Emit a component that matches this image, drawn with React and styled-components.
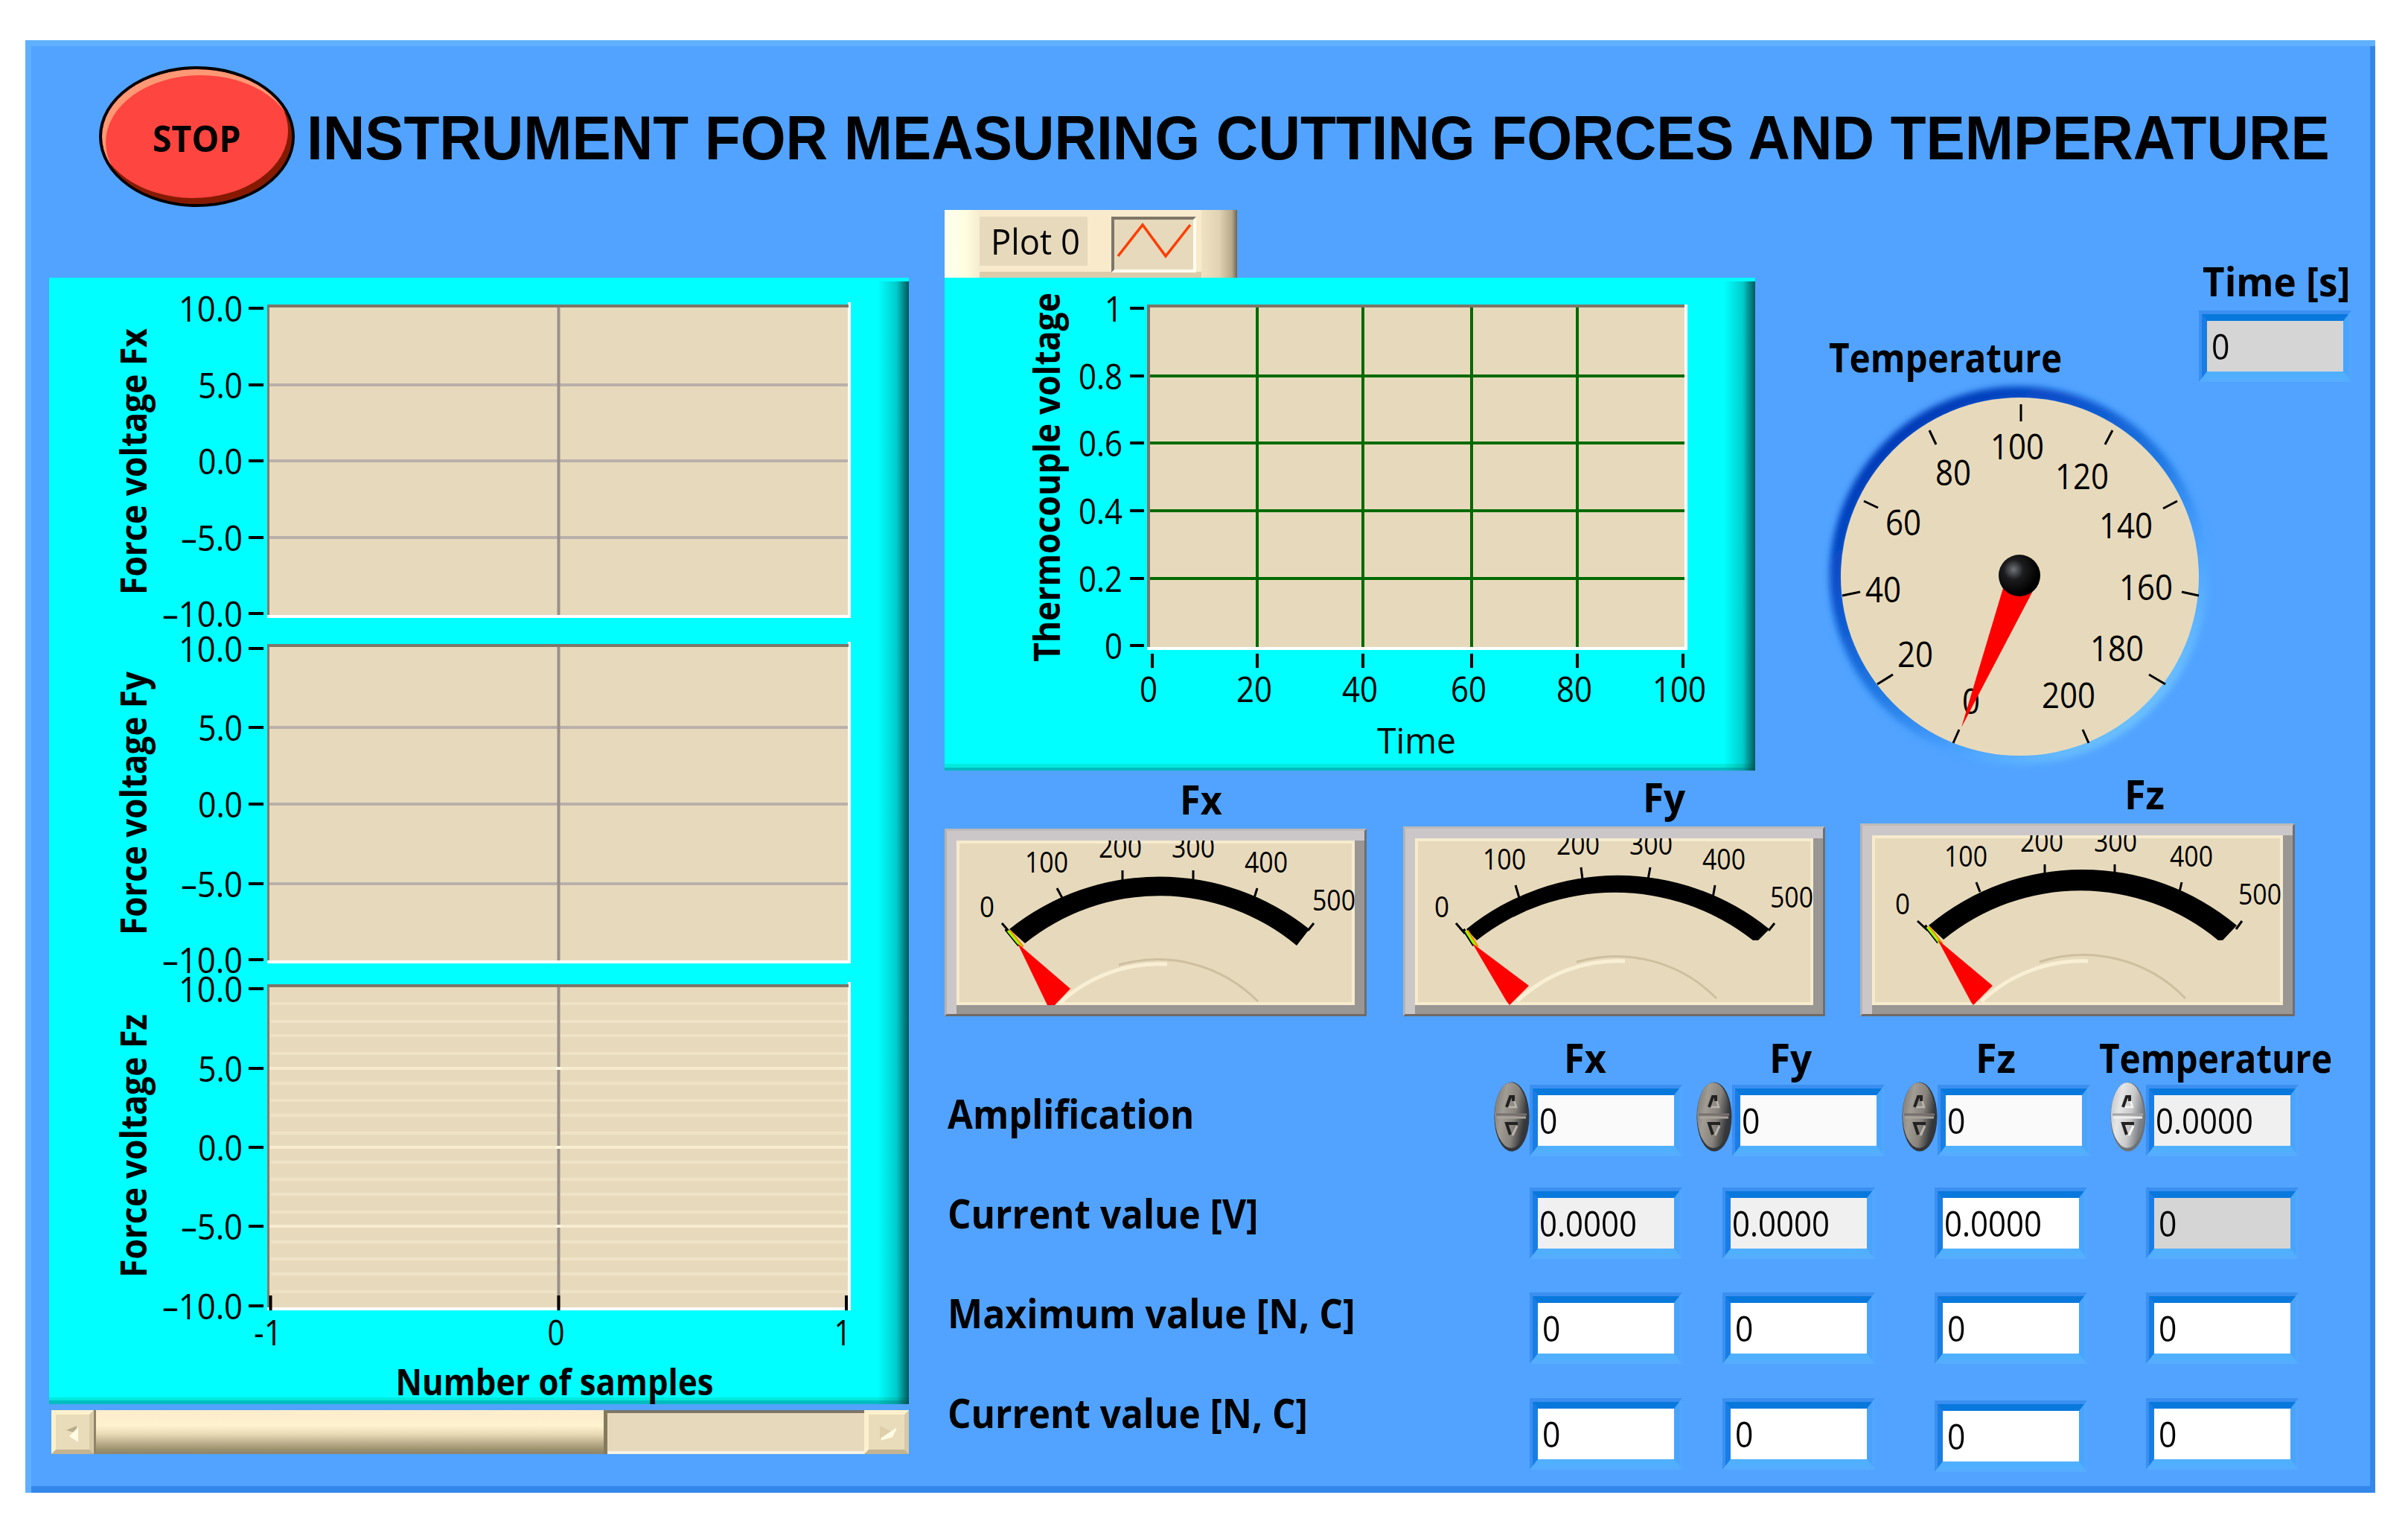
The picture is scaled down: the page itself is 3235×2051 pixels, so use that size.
import React, { useLayoutEffect, useRef, useState } from "react";
import styled, { createGlobalStyle } from "styled-components";

const SKIN = "#e7dabc";
const BLUE = "#51a3ff";

// ---------- data ----------

const graphs = [
    { name: "Fx", top: 409, bottom: 830, ticks: [414, 517, 619, 722, 824], labelY: 620, labelLen: 358, grid: "#b9b0ab" },
    { name: "Fy", top: 865, bottom: 1294, ticks: [871, 977, 1080, 1187, 1289], labelY: 1079, labelLen: 354, grid: "#b9b0ab" },
    { name: "Fz", top: 1322, bottom: 1760, ticks: [1328, 1435, 1541, 1647, 1754], labelY: 1539, labelLen: 354, grid: "#f6ebce", minor: true },
];
const graphLabels = [
    { text: "10.0", w: 86 },
    { text: "5.0", w: 60 },
    { text: "0.0", w: 60 },
    { text: "–5.0", w: 83 },
    { text: "–10.0", w: 108 },
];
const minorLines = [1348, 1372, 1391, 1415, 1455, 1478, 1498, 1522, 1561, 1584, 1604, 1628, 1668, 1691, 1711, 1735];

const chartY = [
    { text: "1", y: 414 },
    { text: "0.8", y: 505 },
    { text: "0.6", y: 595 },
    { text: "0.4", y: 686 },
    { text: "0.2", y: 777 },
    { text: "0", y: 867 },
];
const chartX = [
    { text: "0", x: 1548, tx: 1543 },
    { text: "20", x: 1689, tx: 1685 },
    { text: "40", x: 1831, tx: 1827 },
    { text: "60", x: 1977, tx: 1973 },
    { text: "80", x: 2119, tx: 2115 },
    { text: "100", x: 2261, tx: 2256 },
];

const dial = [
    { text: "0", x: 2648, y: 959, tick: "M2624 998L2632 980" },
    { text: "20", x: 2573, y: 896, tick: "M2522 919L2543 906" },
    { text: "40", x: 2530, y: 809, tick: "M2475 800L2499 795" },
    { text: "60", x: 2557, y: 719, tick: "M2504 673L2523 682" },
    { text: "80", x: 2624, y: 652, tick: "M2592 578L2601 597" },
    { text: "100", x: 2710, y: 617, tick: "M2715 543V566" },
    { text: "120", x: 2797, y: 657, tick: "M2838 578L2828 597" },
    { text: "140", x: 2856, y: 723, tick: "M2925 673L2906 683" },
    { text: "160", x: 2883, y: 806, tick: "M2954 800L2931 795" },
    { text: "180", x: 2844, y: 888, tick: "M2909 919L2887 906" },
    { text: "200", x: 2779, y: 951, tick: "M2806 998L2798 980" },
];

const meters = [
    {
        name: "Fx", width: 567, height: 252, gap: 0, pad: 316,
        view: "1285 1129 535 221",
        labels: [[1326, 1232], [1406, 1172], [1505, 1152], [1603, 1152], [1701, 1172], [1792, 1223]],
        ticks: "M1346 1240L1358 1254M1420 1193L1427 1206M1508 1169V1183M1603 1169V1183M1689 1193L1685 1206M1765 1240L1757 1250",
        band: "M1356 1248A323 323 0 0 1 1759 1248L1742 1270A288 288 0 0 0 1377 1267Z",
        tip: "M1351 1248L1369 1270",
        needle: "1367,1267 1438,1328 1417,1350 1407,1350",
        hub: [1422, 1553, 1690, 1293],
    },
    {
        name: "Fy", width: 567, height: 255, gap: 49, pad: 322,
        view: "1901 1126 535 224",
        labels: [[1937, 1232], [2021, 1168], [2120, 1148], [2218, 1148], [2316, 1168], [2407, 1219]],
        ticks: "M1956 1240L1968 1254M2036 1189L2041 1206M2124 1165L2126 1181M2217 1165L2214 1181M2304 1189L2301 1206M2384 1240L2376 1250",
        band: "M1970 1248A323 323 0 0 1 2377 1248L2362 1263H2355A300 300 0 0 0 1984 1263Z",
        tip: "M1966 1248L1980 1270",
        needle: "1978,1267 2054,1324 2028,1350 2024,1345",
        hub: [2038, 2168, 2306, 1289],
    },
    {
        name: "Fz", width: 584, height: 259, gap: 47, pad: 355,
        view: "2515 1122 552 228",
        labels: [[2556, 1228], [2641, 1164], [2743, 1144], [2842, 1144], [2944, 1164], [3036, 1215]],
        ticks: "M2576 1237L2590 1250M2655 1185L2660 1198M2747 1161V1175M2841 1161V1175M2931 1185L2928 1198M3012 1237L3004 1248",
        band: "M2591 1243A323 323 0 0 1 3005 1243L2986 1263H2980A290 290 0 0 0 2611 1262Z",
        tip: "M2586 1243L2604 1266",
        needle: "2603,1262 2677,1324 2651,1350 2648,1346",
        hub: [2662, 2790, 2936, 1289],
    },
];

const rowLabels = [
    { text: "Amplification", w: 331 },
    { text: "Current value [V]", w: 417 },
    { text: "Maximum value [N, C]", w: 548 },
    { text: "Current value [N, C]", w: 484 },
];

const columns = [
    { name: "Fx", w: 57, head: 94, gap: 0, indent: 48, spin: "dark", values: [["0", "#fafafa"], ["0.0000", "#f0f0f0"], ["0", "#fff"], ["0", "#fff"]] },
    { name: "Fy", w: 57, head: 98, gap: 19, indent: 35, spin: "dark", values: [["0", "#fafafa"], ["0.0000", "#f0f0f0"], ["0", "#fff"], ["0", "#fff"]] },
    { name: "Fz", w: 54, head: 99, gap: 23, indent: 44, spin: "dark", values: [["0", "#fafafa"], ["0.0000", "#fff"], ["0", "#fff"], ["0", "#fff", 3]] },
    { name: "Temperature", w: 313, head: -15, gap: 27, indent: 48, spin: "light", values: [["0.0000", "#f0f0f0"], ["0", "#d5d5d5"], ["0", "#fff"], ["0", "#fff"]] },
];
const rowGaps = [8, 42, 45, 46];

// ---------- text ----------

// Squeezes a line of text to the given width, as the panel font is narrower
const FitText = ({ children, width, ...rest }) => {
    const ref = useRef(null);
    const [scale, setScale] = useState(1);
    useLayoutEffect(() => {
        setScale(width / ref.current.offsetWidth);
    }, [width, children]);
    return (
        <TextSlot $width={width} {...rest}>
            <TextInner ref={ref} style={{ transform: `scaleX(${scale})` }}>{children}</TextInner>
        </TextSlot>
    );
};

const T = ({ x, y, w, size = 48, anchor = "middle", bold, children, ...rest }) => (
    <text x={x} y={y} fontSize={size} fontWeight={bold ? 700 : 400} textAnchor={anchor}
        textLength={w} lengthAdjust="spacingAndGlyphs" {...rest}>
        {children}
    </text>
);

// ---------- parts ----------

const ForceGraphs = () => (
    <GraphPanel>
        <Drawing viewBox="66 373 1155 1513" width="1155" height="1513">
            {graphs.map(g => (
                <g key={g.name}>
                    <rect x="359" y={g.top} width="784" height={g.bottom - g.top} fill={SKIN} />
                    {g.minor && minorLines.map(y => (
                        <path key={y} d={`M364 ${y}H1139`} stroke="#efe3c7" strokeWidth="4" />
                    ))}
                    {g.ticks.slice(1, 4).map(y => (
                        <path key={y} d={`M362 ${y}H1139`} stroke={g.grid} strokeWidth="4" />
                    ))}
                    <path d={`M750.5 ${g.top}V${g.bottom - 4}`} stroke="#9b8f8c" strokeWidth="4" />
                    {g.minor && g.ticks.slice(1, 4).map(y => (
                        <rect key={y} x="747" y={y - 2} width="7" height="4" fill="#fff6e0" />
                    ))}
                    <path d={`M1141 ${g.top - 3}V${g.bottom}`} stroke="#fff" strokeWidth="4" />
                    <path d={`M359 ${g.bottom - 2}H1143`} stroke="#fff" strokeWidth="4" />
                    <path d={`M360.5 ${g.bottom - 4}V${g.top}`} stroke="#857c6e" strokeWidth="3" />
                    <path d={`M359 ${g.top + 2}H1140`} stroke="#7d7668" strokeWidth="4" />
                    {g.ticks.map((y, i) => (
                        <g key={y}>
                            <path d={`M334 ${y}H354`} stroke="#000" strokeWidth="4" />
                            <T x={326} y={y + 18} w={graphLabels[i].w} anchor="end">{graphLabels[i].text}</T>
                        </g>
                    ))}
                    <T x={0} y={0} w={g.labelLen} bold transform={`translate(197 ${g.labelY}) rotate(-90)`}>
                        {`Force voltage ${g.name}`}
                    </T>
                </g>
            ))}
            <path d="M363.5 1740V1760M750.5 1740V1760M1137 1740V1760" stroke="#000" strokeWidth="4" />
            <T x={360} y={1807} w={38}>-1</T>
            <T x={747} y={1807} w={23}>0</T>
            <T x={1132} y={1807} w={23}>1</T>
            <T x={745} y={1874} w={427} bold>Number of samples</T>
        </Drawing>
    </GraphPanel>
);

const SamplesScrollbar = () => (
    <Scrollbar>
        <ScrollButton $width={57}>
            <svg width="26" height="34" viewBox="0 0 26 34">
                <path d="M4 14L18 8V18Z" fill="#b9ad8b" />
                <path d="M8 22L20 10V30Z" fill="#fffbe2" />
            </svg>
        </ScrollButton>
        <ScrollThumb />
        <ScrollTrack />
        <ScrollButton $width={60}>
            <svg width="26" height="34" viewBox="0 0 26 34">
                <path d="M4 8V26L20 16Z" fill="#dccfaa" />
                <path d="M6 26L24 14L20 22Z" fill="#fffbe2" stroke="#fffbe2" strokeWidth="3" />
            </svg>
        </ScrollButton>
    </Scrollbar>
);

const PlotLegend = () => (
    <Legend>
        <LegendName><FitText width={120}>Plot 0</FitText></LegendName>
        <LegendSwatch>
            <svg width="106" height="66" viewBox="0 0 106 66">
                <path d="M5 49L38 7L69 49L102 7" fill="none" stroke="#ff3c00" strokeWidth="3.5" />
            </svg>
        </LegendSwatch>
    </Legend>
);

const VoltageChart = () => (
    <ChartPanel>
        <Drawing viewBox="1269 373 1089 662" width="1089" height="662">
            <rect x="1541" y="409" width="726" height="464" fill={SKIN} />
            {chartY.slice(1, 5).map(t => (
                <path key={t.text} d={`M1545 ${t.y}H2263`} stroke="#006a00" strokeWidth="4" />
            ))}
            {chartX.slice(1, 5).map(t => (
                <path key={t.text} d={`M${t.x} 411V869`} stroke="#006a00" strokeWidth="4" />
            ))}
            <path d="M2265 409V873M1541 871H2267" stroke="#fff" strokeWidth="4" />
            <path d="M1543 869V411H2263" fill="none" stroke="#7d7668" strokeWidth="4" />
            {chartY.map(t => (
                <g key={t.text}>
                    <path d={`M1518 ${t.y}H1537`} stroke="#000" strokeWidth="4" />
                    <T x={1508} y={t.y + 18} w={t.text.length > 1 ? 59 : 24} anchor="end">{t.text}</T>
                </g>
            ))}
            {chartX.map(t => (
                <g key={t.text}>
                    <path d={`M${t.x} 878V897`} stroke="#000" strokeWidth="4" />
                    <T x={t.tx} y={943} w={t.text.length * 24}>{t.text}</T>
                </g>
            ))}
            <T x={1903} y={1012} w={106}>Time</T>
            <T x={0} y={0} w={496} bold transform="translate(1424 641) rotate(-90)">Thermocouple voltage</T>
        </Drawing>
    </ChartPanel>
);

const TemperatureGauge = () => (
    <GaugeColumn>
        <Caption $indent={14}><FitText width={313}>Temperature</FitText></Caption>
        <Drawing viewBox="2443 508 510 532" width="510" height="532">
            <defs>
                <linearGradient id="rim" x1="0.15" y1="0.08" x2="0.85" y2="0.92">
                    <stop offset="0" stopColor="#0036b4" />
                    <stop offset="0.25" stopColor="#0a52cc" />
                    <stop offset="0.5" stopColor="#1f78e2" />
                    <stop offset="0.72" stopColor="#48a0ff" />
                    <stop offset="1" stopColor="#70c4ff" />
                </linearGradient>
                <radialGradient id="knob" cx="0.36" cy="0.36" r="0.6">
                    <stop offset="0" stopColor="#70757a" />
                    <stop offset="0.4" stopColor="#1c1c1e" />
                    <stop offset="1" stopColor="#000" />
                </radialGradient>
                <filter id="soft"><feGaussianBlur stdDeviation="4" /></filter>
            </defs>
            <circle cx="2712" cy="773" r="244" fill="none" stroke="url(#rim)" strokeWidth="20" filter="url(#soft)" />
            <circle cx="2713.5" cy="774.5" r="240.5" fill={SKIN} />
            {dial.map(d => (
                <g key={d.text}>
                    <path d={d.tick} stroke="#000" strokeWidth="3" />
                    <T x={d.x} y={d.y} w={d.text.length * 24}>{d.text}</T>
                </g>
            ))}
            <polygon points="2635,977 2691,790 2733,790" fill="#f00" />
            <circle cx="2713" cy="773" r="28" fill="url(#knob)" />
        </Drawing>
    </GaugeColumn>
);

const Meter = ({ meter }) => {
    const [x1, xm, x2, top] = meter.hub;
    const edge = top + 56;
    return (
        <MeterColumn $gap={meter.gap}>
            <Caption $indent={meter.pad}><FitText width={meter.name === "Fz" ? 54 : 57}>{meter.name}</FitText></Caption>
            <MeterFrame $width={meter.width} $height={meter.height}>
                <Drawing $clip viewBox={meter.view} width="100%" height="100%">
                    <MeterFace view={meter.view} />
                    {meter.labels.map(([x, y], i) => (
                        <T key={i} x={x} y={y} w={i ? 58 : 20} size={38}>{i * 100}</T>
                    ))}
                    <path d={meter.ticks} stroke="#000" strokeWidth="3" fill="none" />
                    <path d={meter.band} fill="#000" />
                    <path d={meter.tip} stroke="#000" strokeWidth="4" />
                    <path d={meter.tip} stroke="#ff8a00" strokeWidth="4" transform="translate(5 2)" />
                    <path d={meter.tip} stroke="#9f0" strokeWidth="3" transform="translate(3 2)" />
                    <path d={`M${xm - 50} ${top + 3}A190 190 0 0 1 ${x2} ${edge - 4}`} fill="none" stroke="#cdbf9f" strokeWidth="3" />
                    <path d={`M${x1} ${edge}A196 196 0 0 1 ${xm + 15} ${top + 2}`} fill="none" stroke="#f9efd4" strokeWidth="5" />
                    <polygon points={meter.needle} fill="#f00" />
                </Drawing>
            </MeterFrame>
        </MeterColumn>
    );
};

const MeterFace = ({ view }) => {
    const [x, y, w, h] = view.split(" ").map(Number);
    return <rect x={x + 2} y={y + 2} width={w - 4} height={h - 4} fill={SKIN} stroke="#f6ebcd" strokeWidth="4" />;
};

const Spinner = ({ tone }) => {
    const light = tone === "light";
    return (
        <svg width="48" height="94" viewBox="0 0 48 94">
            <defs>
                <linearGradient id={`spin-${tone}`} x1="0" y1="0" x2="1" y2="0.35">
                    <stop offset="0" stopColor={light ? "#bcbcbc" : "#77746f"} />
                    <stop offset="0.35" stopColor={light ? "#e6e6e6" : "#a19c94"} />
                    <stop offset="0.7" stopColor={light ? "#c9c9c9" : "#87837c"} />
                    <stop offset="1" stopColor={light ? "#7b7f84" : "#35373a"} />
                </linearGradient>
            </defs>
            <ellipse cx="24" cy="47" rx="23.5" ry="46.5" fill={light ? "#6e7276" : "#33363a"} />
            <ellipse cx="23" cy="45" rx="22" ry="44" fill={`url(#spin-${tone})`} />
            <path d="M3 44H44" stroke={light ? "#a5a5a5" : "#77706e"} strokeWidth="3" />
            <path d="M4 48H43" stroke={light ? "#eee" : "#a8a29c"} strokeWidth="3" />
            <path d="M26 22L30 34H19" stroke={light ? "#f4f4f4" : "#b9b5ae"} strokeWidth="2.5" fill="none" />
            <path d="M17 34L22 20H26V26" stroke="#222" strokeWidth="4" fill="none" />
            <path d="M31 59L25 72" stroke={light ? "#f8f8f8" : "#b9b5ae"} strokeWidth="3" />
            <path d="M32 56H17L22 71" stroke="#222" strokeWidth="4" fill="none" />
        </svg>
    );
};

const Field = ({ value, fill, pad, ...rest }) => (
    <FieldFrame {...rest}>
        <FieldValue $fill={fill} $pad={pad}>
            <FitText width={value.length > 1 ? 131 : 24}>{value}</FitText>
        </FieldValue>
    </FieldFrame>
);

const ValueColumn = ({ column }) => (
    <Column $gap={column.gap}>
        <Caption $indent={column.head}><FitText width={column.w}>{column.name}</FitText></Caption>
        {column.values.map(([value, fill, drop = 0], i) => (
            <ValueRow key={i} $top={rowGaps[i] + drop} $indent={i ? column.indent : 0}>
                {i === 0 && <Spinner tone={column.spin} />}
                <Field value={value} fill={fill} pad={i && value === "0" ? 6 : 2} />
            </ValueRow>
        ))}
    </Column>
);

const App = () => (
    <>
        <GlobalStyle />
        <Panel>
            <Header>
                <StopButton><FitText width={119}>STOP</FitText></StopButton>
                <Title><FitText width={2718}>INSTRUMENT FOR MEASURING CUTTING FORCES AND TEMPERATURE</FitText></Title>
            </Header>
            <Body>
                <LeftColumn>
                    <ForceGraphs />
                    <SamplesScrollbar />
                </LeftColumn>
                <RightColumn>
                    <TopRow>
                        <ChartColumn>
                            <PlotLegend />
                            <VoltageChart />
                        </ChartColumn>
                        <TemperatureGauge />
                        <TimeColumn>
                            <Caption $indent={5}><FitText width={198}>Time [s]</FitText></Caption>
                            <Field value="0" fill="#d5d5d5" pad={6} />
                        </TimeColumn>
                    </TopRow>
                    <MeterRow>
                        {meters.map(m => <Meter key={m.name} meter={m} />)}
                    </MeterRow>
                    <Table>
                        <RowLabels>
                            {rowLabels.map(l => <FitText key={l.text} width={l.w}>{l.text}</FitText>)}
                        </RowLabels>
                        {columns.map(c => <ValueColumn key={c.name} column={c} />)}
                    </Table>
                </RightColumn>
            </Body>
        </Panel>
    </>
);

// ---------- styles ----------

const GlobalStyle = createGlobalStyle`
    *{
        box-sizing: border-box;
    }
    body{
        margin: 0;
        background: #fff;
        font-family: "Open Sans", "Noto Sans", sans-serif;
        color: #000;
        overflow: hidden;
    }
`

const Panel = styled.main`
    width: 3157px;
    height: 1951px;
    margin: 54px 0 0 34px;
    padding-left: 32px;
    background: ${BLUE};
    box-shadow: inset 8px 8px 0 #5fb0ff, inset -7px -9px 0 #3487ea;
`

const TextSlot = styled.span`
    display: block;
    width: ${props => props.$width}px;
    white-space: nowrap;
`

const TextInner = styled.span`
    display: inline-block;
    transform-origin: 0 50%;
`

const Drawing = styled.svg`
    display: block;
    overflow: ${props => props.$clip ? "hidden" : "visible"};
`

const Header = styled.header`
    display: flex;
    align-items: flex-start;
    height: 228px;
    padding: 35px 0 0 67px;
`

const StopButton = styled.button`
    display: flex;
    justify-content: center;
    align-items: center;
    width: 263px;
    height: 189px;
    padding: 4px 0 0;
    border: 4px solid #000;
    border-radius: 50%;
    background: #ff4540;
    box-shadow: inset 5px 8px 0 #ff9874, inset -5px -8px 0 #861a00;
    font: 700 48px/60px "Open Sans", sans-serif;
    color: #000;
    text-align: left;
`

const Title = styled.h1`
    margin: 51px 0 0 16px;
    font: bold 84px/90px "Liberation Sans", Arial, sans-serif;
`

const Body = styled.div`
    display: flex;
    gap: 48px;
`

const LeftColumn = styled.section`
    width: 1155px;
    margin-top: 91px;
`

const bevel = `
    background:
        linear-gradient(to right, rgba(0,90,90,0), rgba(0,110,110,0.35) 60%, rgba(0,70,70,0.9)) right 5px / 42px 100% no-repeat,
        linear-gradient(to bottom, #00eadc 50%, #00bcc0 50%) 0 100% / 100% 9px no-repeat,
        #00ffff;
`

const GraphPanel = styled.div`
    height: 1513px;
    ${bevel}
`

const Scrollbar = styled.div`
    display: flex;
    width: 1152px;
    height: 59px;
    margin: 8px 0 0 3px;
`

const ScrollButton = styled.div`
    display: flex;
    justify-content: center;
    align-items: center;
    width: ${props => props.$width}px;
    flex: none;
    background: #e9dcbb;
    border: 6px solid;
    border-color: #fdf0cd #d8caa6 #c4b391 #fdf0cd;
`

const ScrollThumb = styled.div`
    width: 690px;
    border-left: 3px solid #8f8468;
    border-right: 5px solid #857a5a;
    background: linear-gradient(#fbeccb, #fff2cf 35%, #e8dab5 55%, #bcae8c 75%, #9b906c 90%, #8f846c);
`

const ScrollTrack = styled.div`
    flex: 1;
    background: ${SKIN};
    border-top: 4px solid #7d7668;
    border-bottom: 4px solid #f6f2e8;
`

const RightColumn = styled.section`
    width: 1922px;
`

const TopRow = styled.div`
    display: flex;
    height: 758px;
`

const ChartColumn = styled.div`
    width: 1089px;
`

const Legend = styled.div`
    display: flex;
    align-items: flex-start;
    width: 393px;
    height: 91px;
    padding: 9px 0 0 47px;
    background:
        linear-gradient(to right, #fffff0, #fffde0 60%, #f5edcf) 0 0 / 47px 100% no-repeat,
        linear-gradient(to right, #efe2c2, #e0d2b2 50%, #b8a98a 85%, #6e6450) right 0 / 48px 100% no-repeat,
        linear-gradient(to top, #dccbab 8px, #f8eacb 8px);
`

const LegendName = styled.div`
    width: 145px;
    height: 66px;
    padding: 3px 0 0 15px;
    background: ${SKIN};
    font-size: 48px;
    line-height: 60px;
`

const LegendSwatch = styled.div`
    width: 114px;
    height: 75px;
    margin-left: 32px;
    border: 4px solid;
    border-color: #7d7668 #fffdf0 #fffdf0 #7d7668;
    background: ${SKIN};
`

const ChartPanel = styled.div`
    height: 662px;
    ${bevel}
`

const Caption = styled.div`
    height: 60px;
    padding-left: ${props => Math.max(props.$indent, 0)}px;
    margin-left: ${props => Math.min(props.$indent, 0)}px;
    font-size: 53px;
    line-height: 64px;
    font-weight: 700;
`

const GaugeColumn = styled.div`
    width: 510px;
    margin: 166px 0 0 85px;
`

const TimeColumn = styled.div`
    display: flex;
    flex-direction: column;
    gap: 11px;
    width: 206px;
    margin: 64px 0 0 1px;
`

const MeterRow = styled.div`
    display: flex;
    align-items: flex-end;
    height: 325px;
`

const MeterColumn = styled.div`
    display: flex;
    flex-direction: column;
    gap: 11px;
    margin-left: ${props => props.$gap}px;
`

const MeterFrame = styled.div`
    width: ${props => props.$width}px;
    height: ${props => props.$height}px;
    border: 3px solid;
    border-color: #bdbab8 #6f6f6f #6f6a66 #b5b3b0;
    box-shadow: inset 13px 13px 0 #cbc7c9, inset -13px -12px 0 #999694;
    padding: 13px 13px 12px;
`

const Table = styled.div`
    display: flex;
    padding-top: 24px;
`

const RowLabels = styled.div`
    display: flex;
    flex-direction: column;
    gap: 74px;
    width: 738px;
    padding: 77px 0 0 4px;
    font-size: 53px;
    line-height: 60px;
    font-weight: 700;
`

const Column = styled.div`
    width: 253px;
    margin-left: ${props => props.$gap}px;
`

const ValueRow = styled.div`
    display: flex;
    align-items: flex-start;
    height: 96px;
    margin-top: ${props => props.$top}px;
    margin-left: ${props => props.$indent}px;
    > svg{
        flex: none;
        margin-top: -4px;
    }
`

const FieldFrame = styled.div`
    flex: none;
    width: 205px;
    height: 96px;
    border: 5px solid;
    border-width: 5px 4px;
    border-color: #3a8ff0 #51a6ff #56adff #3a8ff0;
`

const FieldValue = styled.div`
    height: 86px;
    padding-left: ${props => props.$pad}px;
    border: 9px solid;
    border-width: 9px 7px;
    border-color: #0878dd #4aa4fb #50b0ff #1a7de6;
    background: ${props => props.$fill};
    background-clip: padding-box;
    font-size: 48px;
    line-height: 67px;
`

export default App;
